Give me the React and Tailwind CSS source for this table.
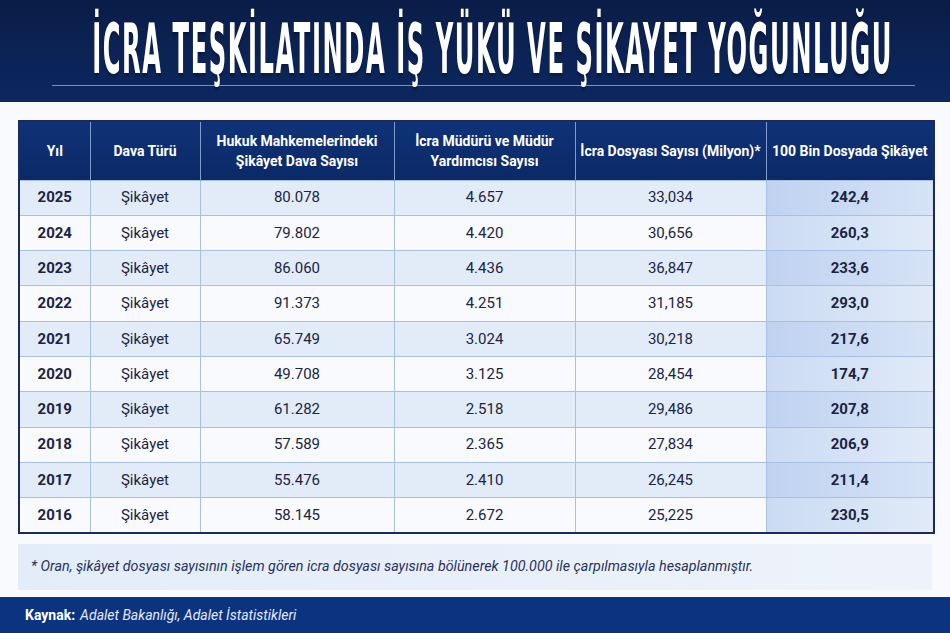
const rows = [
  ["2025", "80.078", "4.657", "33,034", "242,4"],
  ["2024", "79.802", "4.420", "30,656", "260,3"],
  ["2023", "86.060", "4.436", "36,847", "233,6"],
  ["2022", "91.373", "4.251", "31,185", "293,0"],
  ["2021", "65.749", "3.024", "30,218", "217,6"],
  ["2020", "49.708", "3.125", "28,454", "174,7"],
  ["2019", "61.282", "2.518", "29,486", "207,8"],
  ["2018", "57.589", "2.365", "27,834", "206,9"],
  ["2017", "55.476", "2.410", "26,245", "211,4"],
  ["2016", "58.145", "2.672", "25,225", "230,5"],
];

const headers = [
  ["Yıl"],
  ["Dava Türü"],
  ["Hukuk Mahkemelerindeki", "Şikâyet Dava Sayısı"],
  ["İcra Müdürü ve Müdür", "Yardımcısı Sayısı"],
  ["İcra Dosyası Sayısı (Milyon)*"],
  ["100 Bin Dosyada Şikâyet"],
];

const widths = ["w-[71px]", "w-[110px]", "w-[194px]", "w-[181px]", "w-[191px]", "w-[168px]"];

export default function App() {
  return (
    <div className="w-[950px] h-[633px] flex flex-col bg-[#f8fafd] font-['Roboto','Liberation_Sans',sans-serif] text-[#1b2442] overflow-hidden">
      {/* title band */}
      <div className="h-[102px] shrink-0 bg-gradient-to-b from-[#0a1d48] to-[#0c2860] flex flex-col items-center pt-[14px]">
        <h1 className="h-[70px] flex items-center justify-center text-white font-bold text-[69px] leading-none font-['DejaVu_Sans_Condensed','Liberation_Sans_Narrow',sans-serif] whitespace-nowrap scale-x-[0.39] tracking-[4px] pl-[92px] drop-shadow-[0_2px_2px_rgba(0,0,0,0.4)]">
          İCRA TEŞKİLATINDA İŞ YÜKÜ VE ŞİKAYET YOĞUNLUĞU
        </h1>
        <div className="mt-[1px] ml-[17px] w-[863px] h-px bg-[#7d90bb]" />
      </div>

      {/* table */}
      <div className="flex-1 px-[18px] pt-[18px]">
        <table className="border-collapse border-2 border-[#1c2a5c] w-[915px] table-fixed">
          <thead>
            <tr className="h-[59px] bg-gradient-to-b from-[#0f3278] to-[#0b2966]">
              {headers.map((h, i) => (
                <th
                  key={i}
                  className={`${widths[i]} border-x border-[#7f9ccd] text-white font-bold text-[14px] leading-[20px] text-center align-middle`}
                >
                  {h.map((line) => (
                    <div key={line}>{line}</div>
                  ))}
                </th>
              ))}
            </tr>
          </thead>
          <tbody>
            {rows.map((r, i) => (
              <tr key={r[0]} className={`h-[35.3px] ${i % 2 === 0 ? "bg-[#e2ebf8]" : "bg-[#f8fafd]"}`}>
                <td className="border border-[#a9bfe3] text-center font-bold text-[15px]">{r[0]}</td>
                <td className="border border-[#a9bfe3] text-center text-[15px]">Şikâyet</td>
                <td className="border border-[#a9bfe3] text-center text-[15px]">{r[1]}</td>
                <td className="border border-[#a9bfe3] text-center text-[15px]">{r[2]}</td>
                <td className="border border-[#a9bfe3] text-center text-[15px]">{r[3]}</td>
                <td
                  className={`border border-[#a9bfe3] text-center font-bold text-[15px] bg-gradient-to-r ${
                    i % 2 === 0 ? "from-[#bfd2f0] to-[#d6e3f6]" : "from-[#cbdbf3] to-[#e0eaf8]"
                  }`}
                >
                  {r[4]}
                </td>
              </tr>
            ))}
          </tbody>
        </table>

        <div className="mt-[10px] h-[46px] bg-gradient-to-r from-[#e3ecf9] to-[#eef3fb] flex items-center px-[13px]">
          <p className="italic text-[14.3px] text-[#27325c]">
            * Oran, şikâyet dosyası sayısının işlem gören icra dosyası sayısına bölünerek 100.000 ile çarpılmasıyla hesaplanmıştır.
          </p>
        </div>
      </div>

      {/* source bar */}
      <div className="h-[36px] shrink-0 bg-[#0c3380] flex items-center px-[25px] text-[14px] text-[#e3e9f6]">
        <span className="font-bold text-white mr-[5px]">Kaynak:</span>
        <span className="italic">Adalet Bakanlığı, Adalet İstatistikleri</span>
      </div>
    </div>
  );
}
